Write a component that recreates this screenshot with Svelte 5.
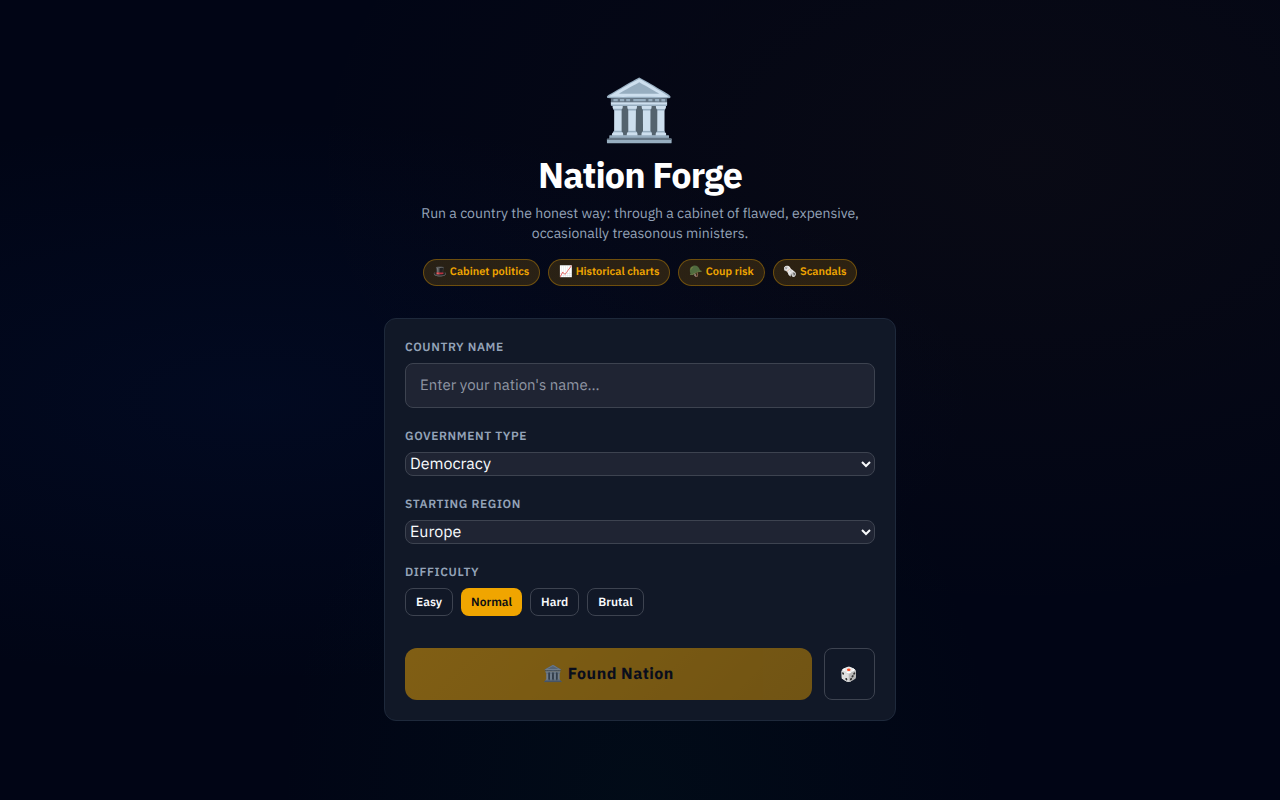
<script>
  const tags = [
    { icon: '🎩', text: 'Cabinet politics' },
    { icon: '📈', text: 'Historical charts' },
    { icon: '🪖', text: 'Coup risk' },
    { icon: '🗞️', text: 'Scandals' }
  ];
  const levels = ['Easy', 'Normal', 'Hard', 'Brutal'];

  let name = $state('');
  let government = $state('Democracy');
  let region = $state('Europe');
  let difficulty = $state('Normal');

  const names = ['Valdoria', 'Kestrel Union', 'Norhaven', 'Ostmark'];
  function randomize() {
    name = names[Math.floor(Math.random() * names.length)];
  }
</script>

<main>
  <div class="setup">
    <header>
      <div class="emblem" aria-hidden="true">🏛️</div>
      <h1>Nation Forge</h1>
      <p>Run a country the honest way: through a cabinet of flawed, expensive, occasionally treasonous ministers.</p>
      <ul class="tags">
        {#each tags as tag}
          <li>{tag.icon} {tag.text}</li>
        {/each}
      </ul>
    </header>

    <form class="card" onsubmit={(e) => e.preventDefault()}>
      <div class="field">
        <label for="name">Country name</label>
        <input id="name" type="text" placeholder="Enter your nation's name..." bind:value={name} />
      </div>
      <div class="field">
        <label for="government">Government type</label>
        <select id="government" bind:value={government}>
          <option>Democracy</option>
          <option>Monarchy</option>
          <option>Republic</option>
        </select>
      </div>
      <div class="field">
        <label for="region">Starting region</label>
        <select id="region" bind:value={region}>
          <option>Europe</option>
          <option>Asia</option>
          <option>Africa</option>
        </select>
      </div>
      <div class="field">
        <span class="label" id="difficulty">Difficulty</span>
        <div class="levels" role="group" aria-labelledby="difficulty">
          {#each levels as level}
            <button
              type="button"
              class:active={difficulty === level}
              aria-pressed={difficulty === level}
              onclick={() => (difficulty = level)}>{level}</button>
          {/each}
        </div>
      </div>
      <div class="actions">
        <button class="found" type="submit" disabled={!name.trim()}>🏛️ Found Nation</button>
        <button class="dice" type="button" aria-label="Random nation" onclick={randomize}>🎲</button>
      </div>
    </form>
  </div>
</main>

<style>
  :global(body) {
    margin: 0;
    background: #020412;
  }

  main, input, select, button {
    font-family: 'IBM Plex Sans', Inter, 'Noto Color Emoji', sans-serif;
    text-rendering: geometricPrecision;
  }

  main {
    box-sizing: border-box;
    min-height: 100vh;
    display: flex;
    align-items: center;
    justify-content: center;
    padding: 24px;
    color: #f8fafc;
    background:
      radial-gradient(ellipse at 20% 50%, rgba(10, 55, 150, 0.09) 0%, transparent 50%),
      radial-gradient(ellipse at 80% 20%, rgba(160, 100, 10, 0.05) 0%, transparent 50%),
      radial-gradient(ellipse at 50% 100%, rgba(6, 95, 60, 0.07) 0%, transparent 40%),
      #010515;
  }

  .setup {
    width: 100%;
    max-width: 512px;
  }

  header {
    display: flex;
    flex-direction: column;
    align-items: center;
    text-align: center;
    margin-bottom: 32px;
  }

  .emblem {
    font-size: 60px;
    line-height: 60px;
    margin-bottom: 16px;
  }

  h1 {
    margin: 0 0 8px;
    font-size: 36px;
    line-height: 40px;
    font-weight: 700;
    letter-spacing: -0.025em;
    color: #fff;
  }

  p {
    margin: 0 0 16px;
    max-width: 448px;
    font-size: 14px;
    line-height: 20px;
    color: #94a3b8;
  }

  .tags {
    display: flex;
    flex-wrap: wrap;
    justify-content: center;
    gap: 8px;
    margin: 0;
    padding: 0;
    list-style: none;
  }

  .tags li {
    padding: 4px 10px;
    border: 1px solid rgba(240, 165, 0, 0.35);
    border-radius: 16px;
    background: rgba(240, 165, 0, 0.16);
    color: #f0a500;
    font-size: 11px;
    line-height: 17px;
    font-weight: 600;
  }

  .card {
    padding: 20px;
    border: 1px solid #1e293b;
    border-radius: 12px;
    background: #111827;
  }

  .field {
    display: flex;
    flex-direction: column;
    gap: 6px;
    margin-bottom: 20px;
  }

  label, .label {
    font-size: 12px;
    line-height: 18px;
    font-weight: 600;
    letter-spacing: 0.05em;
    text-transform: uppercase;
    color: #94a3b8;
  }

  input, select {
    box-sizing: border-box;
    width: 100%;
    border: 1px solid #3d4350;
    border-radius: 8px;
    background: #1f2433;
    color: #f8fafc;
  }

  input {
    height: 45px;
    padding: 10px 14px;
    font-size: 15px;
  }

  input::placeholder {
    color: #9096a3;
    opacity: 1;
  }

  select {
    height: 24px;
    font-size: 16px;
  }

  .levels {
    display: flex;
    gap: 8px;
  }

  .levels button {
    height: 28px;
    padding: 0 10px;
    border: 1px solid #3d4350;
    border-radius: 8px;
    background: transparent;
    color: #f8fafc;
    font-size: 12px;
    font-weight: 600;
  }

  .levels .active {
    border: 0;
    background: #f0a500;
    color: #0b0d14;
  }

  .actions {
    display: flex;
    gap: 12px;
    margin-top: 32px;
  }

  .found {
    flex: 1;
    height: 52px;
    border: 0;
    border-radius: 12px;
    background: linear-gradient(135deg, #f0a500, #d09000);
    color: #020412;
    font-size: 16px;
    font-weight: 700;
    letter-spacing: 0.03em;
  }

  .found:disabled {
    opacity: 0.5;
  }

  .dice {
    width: 51px;
    padding: 0;
    border: 1px solid #3d4350;
    border-radius: 8px;
    background: transparent;
    color: #f8fafc;
    font-size: 14px;
  }
</style>
